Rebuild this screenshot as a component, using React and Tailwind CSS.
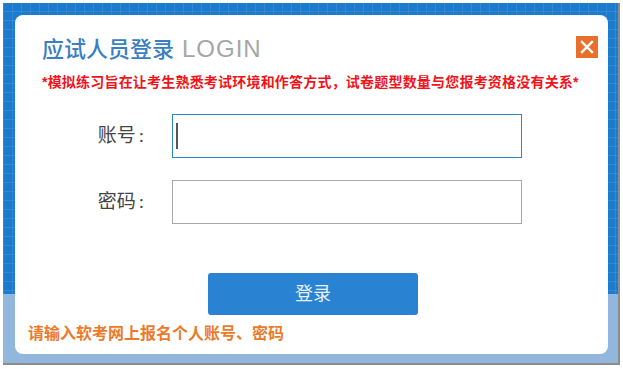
import React from 'react';

const SANS = "font-['Liberation_Sans','Noto_Sans_CJK_SC',sans-serif]";
const SERIF = "font-['Liberation_Serif','Noto_Sans_CJK_SC',serif]";

const Field = ({ label, focused }) => (
  <div className="flex items-center">
    <label className={`${SERIF} w-[130px] text-right text-[19px] text-[#444] pr-[1px]`}>
      {label}
      <span className="ml-[3px]">:</span>
    </label>
    <div
      className={`ml-[27px] w-[350px] h-[44px] bg-white border flex items-center pl-[3px] ${
        focused ? 'border-[#2f86cc]' : 'border-[#a9a9a9]'
      }`}
    >
      {focused && <span className="w-[2px] h-[26px] bg-[#555]" />}
    </div>
  </div>
);

const App = () => {
  return (
    <div className="w-[623px] h-[369px] bg-white pl-[3px] pt-[3px]">
      <div className="w-[617px] h-[362px] border-r-2 border-b-2 border-[#8c8c8c] bg-[#1d7bcd] bg-[image:linear-gradient(180deg,transparent_0_291px,#93b6dc_291px),repeating-linear-gradient(90deg,rgba(255,255,255,0.09)_0_1px,transparent_1px_9px),repeating-linear-gradient(0deg,rgba(255,255,255,0.09)_0_1px,transparent_1px_9px)] pl-[12px] pt-[12px] pr-[10px] pb-[9px] flex">
        <div className="flex-1 bg-white rounded-[8px] flex flex-col">
          <div className="flex items-start justify-between pl-[27px] pr-[10px] pt-[21px]">
            <h1 className="mt-[1px] flex items-baseline leading-none">
              <span className={`${SANS} text-[22px] font-medium text-[#3a7fc2]`}>应试人员登录</span>
              <span className={`${SANS} ml-[8px] text-[24px] tracking-[1px] text-[#a6a6a6]`}>LOGIN</span>
            </h1>
            <button className="w-[22px] h-[22px] bg-[#e8702a] flex items-center justify-center">
              <svg width="14" height="14" viewBox="0 0 14 14">
                <path d="M2 2 L12 12 M12 2 L2 12" stroke="#fff" strokeWidth="2.4" strokeLinecap="square" />
              </svg>
            </button>
          </div>

          <p className={`${SANS} ml-[27px] mt-[13px] text-[14px] leading-[16px] tracking-[0.2px] font-bold text-[#f0141a]`}>
            *模拟练习旨在让考生熟悉考试环境和作答方式，试卷题型数量与您报考资格没有关系*
          </p>

          <div className="mt-[24px] flex flex-col gap-[22px]">
            <Field label="账号" focused />
            <Field label="密码" />
          </div>

          <button
            className={`${SANS} mt-[49px] ml-[193px] w-[210px] h-[42px] rounded-[3px] bg-[#2a82d2] text-[18px] text-[#e9f1fb]`}
          >
            登录
          </button>

          <p className={`${SANS} ml-[13px] mt-[9px] text-[16px] leading-[20px] font-bold text-[#ec7a2c]`}>
            请输入软考网上报名个人账号、密码
          </p>
        </div>
      </div>
    </div>
  );
};

export default App;
